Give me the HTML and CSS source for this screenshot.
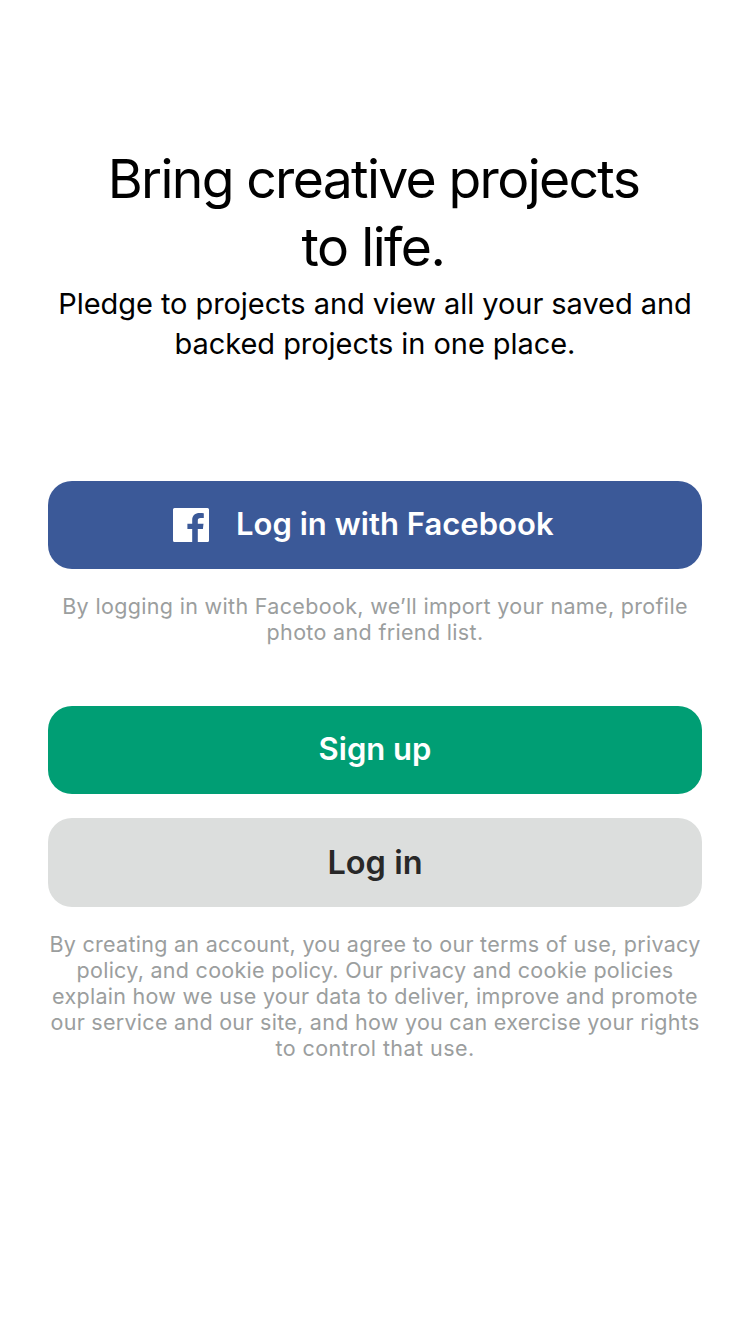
FILE: index.html
```
<!DOCTYPE html>
<html lang="en">
<head>
<meta charset="utf-8">
<title>Log in or sign up</title>
<link rel="stylesheet" href="styles.css">
</head>
<body>
<main class="screen">
  <header class="intro">
    <h1 class="title"><span class="line t1">Bring creative projects</span><span class="line t2">to life.</span></h1>
    <p class="subtitle"><span class="line">Pledge to projects and view all your saved and</span><span class="line">backed projects in one place.</span></p>
  </header>
  <section class="facebook">
    <button class="btn btn-facebook">
      <svg class="fb-icon" viewBox="0 0 36 34" aria-hidden="true"><path fill="#fff" d="M1.5 0H34.5Q36 0 36 1.5V32.5Q36 34 34.5 34H24.8V21H29.9L30.5 15.8H24.8V12.5C24.8 10.9 25.4 10 27.7 10H30.8V5.3C30.2 5.2 28.5 5.1 26.6 5.1C22.2 5.1 19.2 7.6 19.2 12V15.8H14.4V21H19.2V34H1.5Q0 34 0 32.5V1.5Q0 0 1.5 0Z"/></svg>
      <span class="fb-label">Log in with Facebook</span>
    </button>
    <p class="note"><span class="line">By logging in with Facebook, we’ll import your name, profile</span><span class="line">photo and friend list.</span></p>
  </section>
  <section class="account">
    <button class="btn btn-signup"><span>Sign up</span></button>
    <button class="btn btn-login"><span>Log in</span></button>
    <p class="note terms"><span class="line">By creating an account, you agree to our terms of use, privacy</span><span class="line">policy, and cookie policy. Our privacy and cookie policies</span><span class="line">explain how we use your data to deliver, improve and promote</span><span class="line">our service and our site, and how you can exercise your rights</span><span class="line last">to control that use.</span></p>
  </section>
</main>
</body>
</html>
```
FILE: styles.css
```
* { box-sizing: border-box; }
body { margin: 0; background: #fff; font-family: Inter, "Liberation Sans", sans-serif; }
.screen { display: flex; flex-direction: column; width: 750px; height: 1334px; padding: 145px 48px 0; text-align: center; }
h1, p { margin: 0; font-weight: 400; }
.line { display: block; white-space: nowrap; }
.intro { height: 336px; margin: 0 -20px; color: #000; }
.title { font-size: 53.5px; line-height: 68px; }
.t1 { letter-spacing: -1.66px; padding-right: 3px; }
.t2 { letter-spacing: -1.5px; padding-right: 4px; }
.subtitle { margin-top: 3px; font-size: 29px; line-height: 40px; letter-spacing: -0.06px; }
.facebook { height: 225px; }
.account { display: flex; flex-direction: column; }
.btn { display: flex; align-items: center; justify-content: center; width: 654px; height: 88px; padding: 0 0 4px; border: 0; border-radius: 24px; font-family: inherit; font-size: 31px; font-weight: 600; color: #fff; }
.btn-facebook { justify-content: flex-start; padding-left: 125px; gap: 27px; background: #3b5998; }
.fb-label { letter-spacing: 0.03px; }
.fb-icon { width: 36px; height: 34px; margin-top: 4px; }
.btn-signup { background: #009e74; }
.btn-login { height: 89px; margin-top: 24px; padding: 0; background: #dcdedd; color: #282828; font-size: 32.5px; }
.note { margin: 24px -20px 0; font-size: 21.5px; line-height: 26px; letter-spacing: 0.33px; color: #9b9e9e; }
.terms { letter-spacing: 0.28px; }
.last { letter-spacing: 0.45px; }
```
